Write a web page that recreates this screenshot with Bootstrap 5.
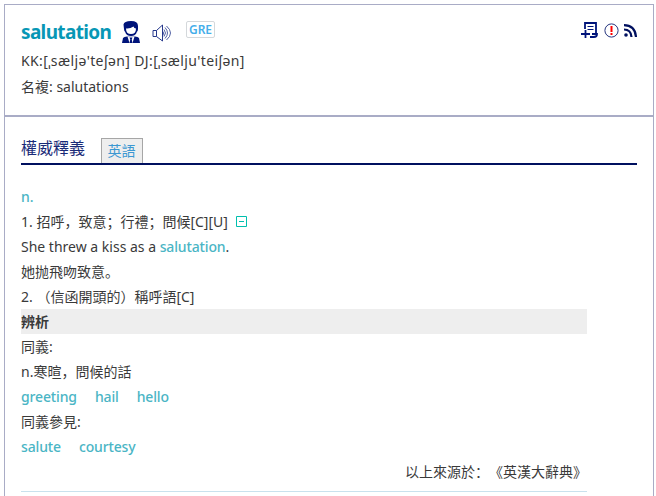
<!DOCTYPE html>
<html lang="zh-Hans">
<head>
<meta charset="utf-8">
<meta name="viewport" content="width=device-width, initial-scale=1">
<title>salutation</title>
<link href="https://cdn.jsdelivr.net/npm/bootstrap@5.3.0/dist/css/bootstrap.min.css" rel="stylesheet">
<style>
html,body{height:496px;overflow:hidden}
body{font:14px/25px "Noto Sans","Noto Sans CJK SC",sans-serif;color:#3a3a3a;background:#fff;text-spacing-trim:space-all}
.entry{margin:0 2px 0 4px;height:492px;border:1px solid #a9acc6;border-bottom:0;overflow:hidden}
.entry-head{height:112px;border-bottom:2px solid #a9acc6;padding:12px 16px 0}
.title-row{height:31px}
.headword{font-size:19px;line-height:30px;font-weight:700;color:#0797b5;width:101px;white-space:nowrap}
.headword span{letter-spacing:-.65px}
.exam{width:29px;height:17px;margin:4px 0 0 14px;border:1px solid #d4d8db;border-radius:2px;color:#45aeea;font-size:12px;line-height:15px;font-weight:600}
.phonetic{height:26px;line-height:26px}
.kk{letter-spacing:.38px}
.tools{margin-top:5px}
.icon-speaker{margin:7px 0 0 12px}
.icon-person{margin-top:4px}
.icon-alert{margin:1px 0 0 6px}
.icon-feed{margin:2px 0 0 5px}
.icon-collapse{margin-left:8px}
.entry-body{padding:20px 16px 0}
.tabs{height:28px;border-bottom:2px solid #00105f;margin-bottom:19px}
.tab-main{font-size:16px;line-height:23px;color:#1a2b78;width:80px}
.tab-lang{width:42px;height:25px;border:1px solid #a6a6a6;border-bottom:0;background:#eee;color:#3c98d2;line-height:24px;margin-top:1px;padding-right:1px}
.sense{width:566px}
.sense>div{height:25px;white-space:nowrap}
.teal{color:#4ab5c5;text-decoration:none;font-weight:500;letter-spacing:-.14px}
.band{background:#eee}
.syn{gap:18px}
.end-rule{width:566px;height:8px;border-bottom:1px solid #c9e1ed}
svg{display:block;flex:none}
</style>
</head>
<body class="pt-1">
<main class="entry">
<header class="entry-head">
<div class="title-row d-flex align-items-start">
<h1 class="headword m-0"><span>salutation</span></h1>
<svg class="icon-person" width="18" height="22" viewBox="0 0 18 22"><path fill="#00147a" d="M1.500 3.500Q2 0 9 0q7 0 7 5v3q0 2-1.200 3-1 4-5.800 4t-5.800-4Q2 10 2 8z"/><path fill="#fff" d="M4 7.500Q8 8 11.500 5.500q.5 2 2.500 2Q14 13 9 13T4 7.500z"/><path fill="#00147a" d="M0 22l1-5q1-1.500 4-1.500h8q3 0 4 1.500l1 5z"/><path fill="#fff" d="M5.500 15.500h7L10.500 22h-3z"/><path fill="#00147a" d="M7.500 16.500h3l-.8 2 .8 3.500h-3l.8-3.500z"/></svg>
<svg class="icon-speaker" width="20" height="18" viewBox="0 0 20 18" fill="none" stroke="#26388c"><path d="M1 6.500h3.500v6H1zM4.500 6.500l6-5.500v16l-6-4.500M10.500 7q2 2 0 5"/><path stroke-width=".8" d="M12 5.500q3 3.500 0 7M13 3.500q5 5.500 0 11M14.500 2q8 7 0 14"/></svg>
<span class="exam text-center">GRE</span>
<div class="tools d-flex ms-auto">
<svg width="17" height="17" viewBox="0 0 17 17" fill="none" stroke="#00147a" stroke-width="1.800"><path d="M4 7V1h11v11M9 15h4q3 0 3-3h-5M0 12h9M4.500 8v8"/><path stroke-width="1.200" d="M6.500 4.500h6M6.500 7.500h6"/></svg>
<svg class="icon-alert" width="15" height="15" viewBox="0 0 15 15"><circle cx="7.500" cy="7.500" r="6.600" fill="none" stroke="#26367f"/><path fill="#f00" d="M6.500 3h2v6h-2zM6.500 10h2v2h-2z"/></svg>
<svg class="icon-feed" width="13" height="13" viewBox="0 0 13 13"><circle cx="2" cy="11" r="1.800" fill="#00105f"/><path fill="none" stroke="#00105f" stroke-width="2.200" d="M0 5.500q7 0 7.500 7.500M0 1.200Q11 1.200 12 13"/></svg>
</div>
</div>
<div class="phonetic kk">KK:[ˌsæljə'teʃən] DJ:[ˌsælju'teiʃən]</div>
<div class="phonetic">名複: salutations</div>
</header>
<section class="entry-body">
<div class="tabs d-flex"><div class="tab-main">權威釋義</div><div class="tab-lang text-center">英語</div></div>
<div class="sense">
<div class="teal">n.</div>
<div class="d-flex align-items-center"><span>1. 招呼，致意；行禮；問候[C][U]</span><svg class="icon-collapse" width="11" height="11" viewBox="0 0 11 11" fill="none" stroke="#00bfae"><path d="M.5.5h10v10H.5zM3 5.500h5"/></svg></div>
<div>She threw a kiss as a <a class="teal">salutation</a>.</div>
<div>她抛飛吻致意。</div>
<div>2. （信函開頭的）稱呼語[C]</div>
<div class="band fw-bold">辨析</div>
<div>同義:</div>
<div>n.寒暄，問候的話</div>
<div class="d-flex syn teal"><span>greeting</span><span>hail</span><span>hello</span></div>
<div>同義參見:</div>
<div class="d-flex syn teal"><span>salute</span><span>courtesy</span></div>
<div class="text-end">以上來源於：《英漢大辭典》</div>
</div>
<div class="end-rule"></div>
</section>
</main>
<script src="https://cdn.jsdelivr.net/npm/bootstrap@5.3.0/dist/js/bootstrap.bundle.min.js"></script>
</body>
</html>
